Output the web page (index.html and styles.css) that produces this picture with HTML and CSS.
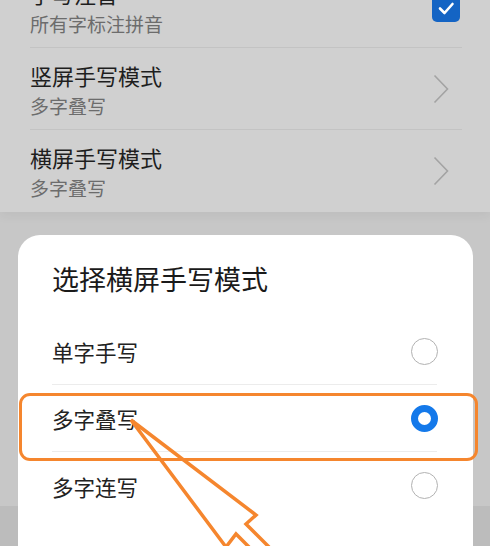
FILE: index.html
```html
<!DOCTYPE html>
<html lang="zh">
<head>
<meta charset="utf-8">
<link rel="stylesheet" href="styles.css">
</head>
<body>
<div class="page">
  <div class="list">
    <div class="row">
      <div class="texts">
        <div class="title">手写注音</div>
        <div class="sub">所有字标注拼音</div>
      </div>
      <div class="check">
        <svg viewBox="0 0 28 28" width="28" height="28"><path d="M8 14.5 L12.5 19 L20.5 10" fill="none" stroke="#fff" stroke-width="2.6" stroke-linecap="round" stroke-linejoin="round"/></svg>
      </div>
    </div>
    <div class="row">
      <div class="texts">
        <div class="title">竖屏手写模式</div>
        <div class="sub">多字叠写</div>
      </div>
      <svg class="chev" viewBox="0 0 16 30" width="16" height="30"><path d="M1.5 1.5 L14.5 15 L1.5 28.5" fill="none" stroke="#a3a3a3" stroke-width="1.6"/></svg>
    </div>
    <div class="row">
      <div class="texts">
        <div class="title">横屏手写模式</div>
        <div class="sub">多字叠写</div>
      </div>
      <svg class="chev" viewBox="0 0 16 30" width="16" height="30"><path d="M1.5 1.5 L14.5 15 L1.5 28.5" fill="none" stroke="#a3a3a3" stroke-width="1.6"/></svg>
    </div>
  </div>

  <div class="dialog">
    <div class="dtitle">选择横屏手写模式</div>
    <div class="opt">
      <span>单字手写</span>
      <span class="radio"></span>
    </div>
    <div class="opt">
      <span>多字叠写</span>
      <span class="radio on"></span>
    </div>
    <div class="opt">
      <span>多字连写</span>
      <span class="radio"></span>
    </div>
  </div>

  <div class="highlight"></div>
  <svg class="arrow" viewBox="0 0 490 546" width="490" height="546">
    <polyline points="264,562 236,534 226,547 131,420 256,515 246,524 284,562" fill="none" stroke="#f5862e" stroke-width="3.5" stroke-linejoin="miter"/>
  </svg>
</div>
</body>
</html>
```

FILE: styles.css
```css
* { box-sizing: border-box; }
html, body { margin: 0; padding: 0; }
body {
  width: 490px;
  height: 546px;
  overflow: hidden;
  font-family: "Noto Sans CJK SC", "Noto Sans", sans-serif;
}
.page {
  position: relative;
  width: 490px;
  height: 546px;
  overflow: hidden;
  background: linear-gradient(to bottom, #c7c7c7 0, #c7c7c7 506px, #bcbcbc 506px);
}
.list {
  background: #d0d0d0;
  margin-top: -34px;
  box-shadow: 0 4px 10px rgba(0,0,0,0.05);
}
.row {
  height: 82px;
  margin: 0 28px 0 30px;
  display: flex;
  align-items: center;
  justify-content: space-between;
  border-bottom: 1px solid #c3c3c3;
}
.row:last-child { border-bottom: none; }
.texts {
  display: flex;
  flex-direction: column;
  gap: 6px;
  padding-top: 2px;
}
.title {
  font-size: 22px;
  line-height: 26px;
  color: #1e1e1e;
}
.sub {
  font-size: 19px;
  line-height: 24px;
  color: #6c6c6c;
}
.check {
  width: 28px;
  height: 29px;
  border-radius: 5px;
  background: #1464c4;
  margin-right: 2px;
  margin-top: 2px;
  display: flex;
  align-items: center;
}
.chev { margin-right: 13px; }

.dialog {
  margin: 23px 17px 0 18px;
  height: 340px;
  background: #ffffff;
  border-radius: 22px 22px 0 0;
  padding: 27px 36px 0 34px;
}
.dtitle {
  font-size: 27px;
  line-height: 34px;
  color: #1a1a1a;
  margin-bottom: 22px;
}
.opt {
  height: 67px;
  display: flex;
  align-items: center;
  justify-content: space-between;
  font-size: 21.5px;
  color: #222;
  border-bottom: 1px solid #ececec;
}
.opt:last-child { border-bottom: none; }
.opt span:first-child { padding-top: 1px; }
.radio {
  width: 27px;
  height: 27px;
  border-radius: 50%;
  border: 1.5px solid #b2b2b2;
  margin-right: -1px;
}
.radio.on {
  border: 7.5px solid #1479ea;
}
.highlight {
  position: absolute;
  left: 19px;
  top: 393px;
  width: 459px;
  height: 68px;
  border: 3.5px solid #f5862e;
  border-radius: 11px;
}
.arrow {
  position: absolute;
  left: 0;
  top: 0;
}
```
